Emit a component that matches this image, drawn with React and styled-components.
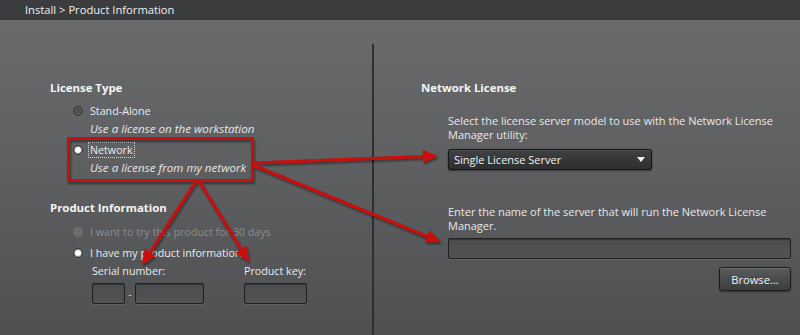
import React from "react";
import styled, { createGlobalStyle } from "styled-components";

const Global = createGlobalStyle`
  *, *::before, *::after { box-sizing: border-box; }
  html, body { margin: 0; padding: 0; background: #5d5e60; }
  body { font-family: "Open Sans", "Liberation Sans", sans-serif; }
`;

const Page = styled.div`
  position: relative;
  width: 800px;
  height: 335px;
  overflow: hidden;
  display: flex;
  flex-direction: column;
  background: linear-gradient(#6b6c6e 0%, #5e5f61 50%, #4f5052 100%);
  color: #e8e8e8;
  font-size: 10.7px;
`;

const Header = styled.div`
  flex: none;
  height: 20px;
  background: #3b3c3e;
  border-bottom: 1px solid #333436;
  display: flex;
  align-items: center;
  padding-left: 25px;
  font-size: 11.2px;
  color: #efefef;
`;

const Body = styled.div`
  flex: 1;
  display: flex;
  padding-top: 24px;
`;

const LeftCol = styled.div`
  width: 372px;
  flex: none;
  padding: 37px 0 0 50px;
  display: flex;
  flex-direction: column;
`;

const RightCol = styled.div`
  flex: 1;
  border-left: 2px solid #2e2f31;
  padding: 37px 9px 0 47px;
  display: flex;
  flex-direction: column;
`;

const Heading = styled.div`
  font-weight: 700;
  font-size: 11.4px;
  line-height: 14px;
  color: #f4f4f4;
  margin-top: ${(p) => p.$mt || 0}px;
`;

const RadioRow = styled.div`
  display: flex;
  align-items: center;
  gap: 7px;
  height: 18px;
  margin-left: 23px;
  margin-top: ${(p) => p.$mt || 0}px;
  color: ${(p) => (p.$disabled ? "#8b8c8e" : "#ebebeb")};
`;

const Radio = styled.span`
  width: 10px;
  height: 10px;
  border-radius: 50%;
  flex: none;
  border: 1px solid ${(p) => (p.$disabled ? "#6e6f71" : "#2a2b2d")};
  background: ${(p) =>
    p.$checked
      ? "radial-gradient(circle, #ffffff 0 2.2px, #d8d8d8 2.8px, #8a8a8a 4px)"
      : p.$disabled
      ? "radial-gradient(circle, #6a6b6d 0 3px, #727375 4px)"
      : "radial-gradient(circle, #505153 0 3px, #6c6d6f 4px)"};
  box-shadow: ${(p) => (p.$disabled ? "none" : "0 0 0 1px rgba(120,120,120,0.35)")};
`;

const Focus = styled.span`
  outline: 1px dotted #d4d4d4;
  outline-offset: 1px;
  line-height: 12px;
`;

const Desc = styled.div`
  font-style: italic;
  font-size: 11.6px;
  line-height: 18px;
  padding-left: 40px;
  color: #e6e6e6;
`;

const Fields = styled.div`
  display: grid;
  grid-template-columns: 152px auto;
  margin-left: 42px;
`;

const Label = styled.div`
  line-height: 18px;
  color: #ebebeb;
`;

const FieldRow = styled.div`
  display: flex;
  align-items: center;
  margin-top: 3px;
`;

const Input = styled.div`
  width: ${(p) => p.$w}px;
  height: ${(p) => p.$h || 21}px;
  border: 1px solid #1f2022;
  border-radius: 2px;
  background: linear-gradient(#4b4c4e, #525355);
  box-shadow: inset 0 1px 1px rgba(0, 0, 0, 0.3), 0 1px 0 rgba(255, 255, 255, 0.08);
`;

const Dash = styled.span`
  width: 10px;
  text-align: center;
  color: #cfcfcf;
`;

const Para = styled.div`
  font-size: 11px;
  line-height: 14px;
  margin-left: 27px;
  margin-top: ${(p) => p.$mt}px;
  color: #e8e8e8;
`;

const Select = styled.div`
  margin-left: 27px;
  margin-top: 7px;
  width: 204px;
  height: 21px;
  border: 1px solid #151617;
  border-radius: 2px;
  background: linear-gradient(#404143, #2d2e30);
  box-shadow: 0 1px 2px rgba(0, 0, 0, 0.45), inset 0 1px 0 rgba(255, 255, 255, 0.08);
  display: flex;
  align-items: center;
  justify-content: space-between;
  padding: 0 6px 0 5px;
  color: #f2f2f2;
  font-size: 11px;
`;

const Caret = styled.span`
  width: 0;
  height: 0;
  border-left: 4px solid transparent;
  border-right: 4px solid transparent;
  border-top: 5px solid #f2f2f2;
`;

const WideInput = styled(Input)`
  margin-left: 27px;
  margin-top: 5px;
`;

const ButtonRow = styled.div`
  display: flex;
  justify-content: flex-end;
  margin-top: 8px;
`;

const Button = styled.div`
  width: 72px;
  height: 24px;
  border: 1px solid #1b1c1d;
  border-radius: 3px;
  background: linear-gradient(#5a5b5d, #3c3d3f);
  box-shadow: inset 0 1px 0 rgba(255, 255, 255, 0.12), 0 1px 2px rgba(0, 0, 0, 0.4);
  display: flex;
  align-items: center;
  justify-content: center;
  color: #f2f2f2;
  font-size: 11.2px;
`;

const Overlay = styled.svg`
  position: absolute;
  left: 0;
  top: 0;
  pointer-events: none;
`;

const RED = "#cc0a0a";

function arrow(x1, y1, x2, y2, len = 15, half = 6.5) {
  const dx = x2 - x1;
  const dy = y2 - y1;
  const d = Math.hypot(dx, dy);
  const ux = dx / d;
  const uy = dy / d;
  const bx = x2 - ux * len;
  const by = y2 - uy * len;
  const px = -uy * half;
  const py = ux * half;
  return {
    line: { x1, y1, x2: bx + ux * 2, y2: by + uy * 2 },
    head: `${x2},${y2} ${bx + px},${by + py} ${bx - px},${by - py}`,
  };
}

const arrows = [
  arrow(253, 163, 438, 156),
  arrow(253, 165, 441, 242),
  arrow(196, 181, 142, 265),
  arrow(199, 181, 249, 262),
];

export default function App() {
  return (
    <>
      <Global />
      <Page>
        <Header>Install &gt; Product Information</Header>
        <Body>
          <LeftCol>
            <Heading>License Type</Heading>
            <RadioRow $mt={7}>
              <Radio />
              <span>Stand-Alone</span>
            </RadioRow>
            <Desc>Use a license on the workstation</Desc>
            <RadioRow $mt={3}>
              <Radio $checked />
              <Focus>Network</Focus>
            </RadioRow>
            <Desc>Use a license from my network</Desc>

            <Heading $mt={24}>Product Information</Heading>
            <RadioRow $mt={8} $disabled>
              <Radio $disabled />
              <span>I want to try this product for 30 days</span>
            </RadioRow>
            <RadioRow $mt={3}>
              <Radio $checked />
              <span>I have my product information</span>
            </RadioRow>
            <Fields>
              <Label>Serial number:</Label>
              <Label>Product key:</Label>
              <FieldRow>
                <Input $w={33} />
                <Dash>-</Dash>
                <Input $w={69} />
              </FieldRow>
              <FieldRow>
                <Input $w={63} />
              </FieldRow>
            </Fields>
          </LeftCol>

          <RightCol>
            <Heading>Network License</Heading>
            <Para $mt={19}>
              Select the license server model to use with the Network License
              <br />
              Manager utility:
            </Para>
            <Select>
              <span>Single License Server</span>
              <Caret />
            </Select>
            <Para $mt={35}>
              Enter the name of the server that will run the Network License
              <br />
              Manager.
            </Para>
            <WideInput $w={343} />
            <ButtonRow>
              <Button>Browse...</Button>
            </ButtonRow>
          </RightCol>
        </Body>

        <Overlay width="800" height="335" viewBox="0 0 800 335">
          <defs>
            <filter id="sh" x="-10%" y="-10%" width="120%" height="130%">
              <feDropShadow dx="1" dy="2" stdDeviation="1.2" floodColor="#000" floodOpacity="0.45" />
            </filter>
          </defs>
          <g filter="url(#sh)">
            <rect x="68.5" y="138.5" width="184" height="42" fill="none" stroke={RED} strokeWidth="3" />
            {arrows.map((a, i) => (
              <g key={i}>
                <line {...a.line} stroke={RED} strokeWidth="3" />
                <polygon points={a.head} fill={RED} />
              </g>
            ))}
          </g>
        </Overlay>
      </Page>
    </>
  );
}
